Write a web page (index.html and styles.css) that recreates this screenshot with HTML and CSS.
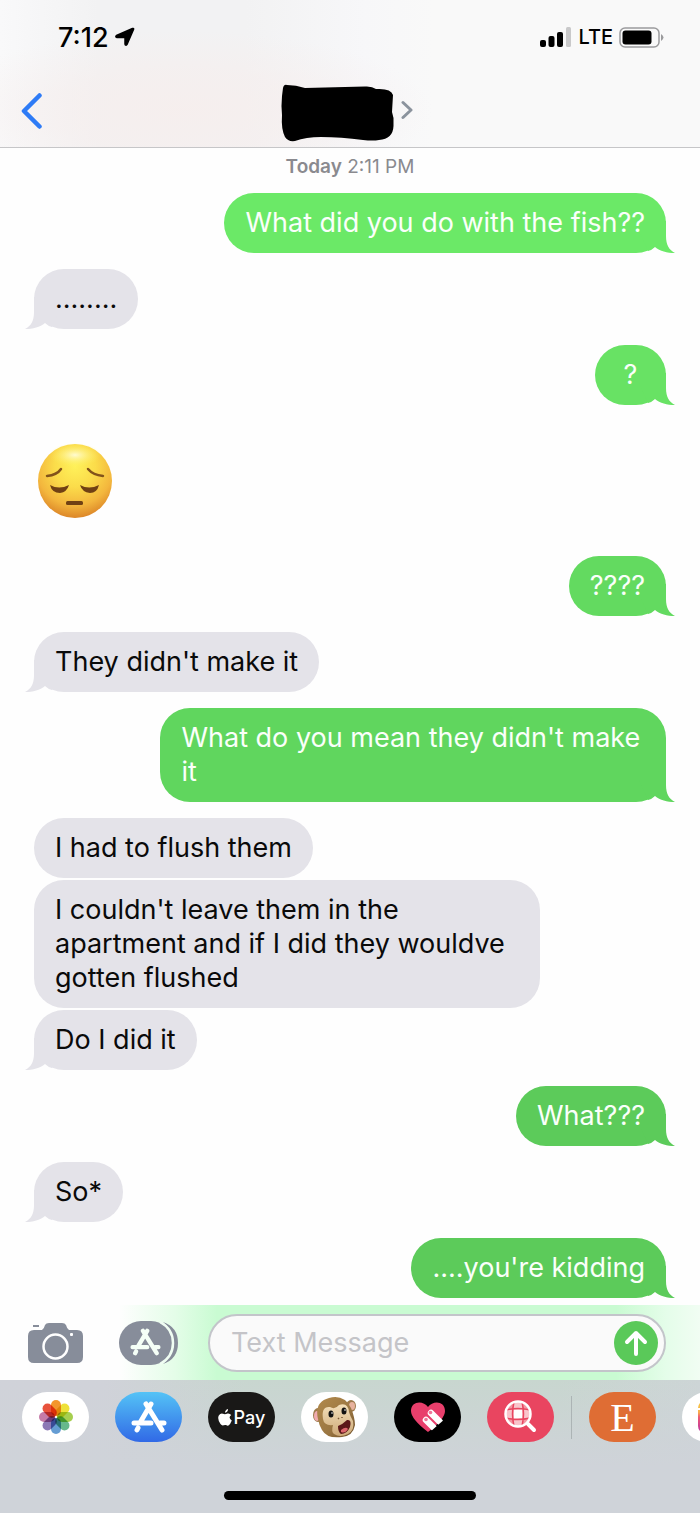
FILE: index.html
```html
<!DOCTYPE html>
<html lang="en">
<head>
<meta charset="utf-8">
<meta name="viewport" content="width=device-width, initial-scale=1">
<title>Messages</title>
<link rel="stylesheet" href="styles.css">
</head>
<body>
<svg class="defs" aria-hidden="true">
  <defs>
    <symbol id="tail" viewBox="0 0 36 32">
      <path d="M0 0H27V15C27 24 30 29 36 32C28 32 21 30 16 26Q13 29 9 30L0 10Z" fill="currentColor"/>
    </symbol>
    <symbol id="store" viewBox="0 0 36 32">
      <g fill="none" stroke="currentColor" stroke-width="5" stroke-linecap="round">
        <path d="M20 3L10 20M15 3L31 29M3 22H20M29 22H33M7 27L6 29"/>
      </g>
    </symbol>
  </defs>
</svg>
<header class="header">
  <div class="status">
    <div class="status-left">
      <time class="clock">7:12</time>
      <svg class="location" viewBox="0 0 20 20" aria-hidden="true"><path d="M1.500 8.500L17.500 1.500Q19 1 18.500 2.500L12 17.500Q10.500 19 10 17V10.500H2Q0 10 1.500 8.500Z" stroke="#000" stroke-width="1.500" stroke-linejoin="round"/></svg>
    </div>
    <div class="status-right">
      <svg class="signal" viewBox="0 0 32 20" aria-hidden="true"><rect x="0" y="13" width="6" height="7" rx="2"/><rect x="8.500" y="9" width="6" height="11" rx="2"/><rect x="17" y="5" width="6" height="15" rx="2"/><rect x="26" y="0" width="5" height="20" rx="1.500" fill="#c9c9ca"/></svg>
      <span class="network">LTE</span>
      <svg class="battery" viewBox="0 0 45 21" aria-hidden="true"><rect x="1" y="1" width="39" height="19" rx="5" fill="none" stroke="#9b9b9d" stroke-width="1.500"/><rect x="3.500" y="3.500" width="29" height="14" rx="3"/><path d="M42 7Q47 10.500 42 14Z" fill="#9b9b9d"/></svg>
    </div>
  </div>
  <nav class="nav">
    <button class="back" type="button" aria-label="Back"><svg viewBox="0 0 22 36"><path d="M18.500 2.500L3 18L18.500 33.500" fill="none" stroke="#2e7bf6" stroke-width="4.500" stroke-linecap="round" stroke-linejoin="round"/></svg></button>
    <button class="contact" type="button" aria-label="Contact details">
      <svg class="redaction" viewBox="0 0 113 58"><path d="M2 4Q3 0 6 1Q15 1 24 4L84 2.500Q91 2 95 5Q110 4 112 11L111 28L112.500 34V42Q112 55 98 56Q92 57 82 56Q60 53 40 53Q25 53 14 57Q7 58 4 53Q0 45 1 31Q0 22 1 12Z"/></svg>
      <svg class="chevron" viewBox="0 0 12 20"><path d="M2 2.500L10 10L2 17.500" fill="none" stroke="#8b939d" stroke-width="3" stroke-linecap="round" stroke-linejoin="round"/></svg>
    </button>
    <span></span>
  </nav>
</header>

<main class="thread">
  <p class="stamp"><strong>Today</strong> 2:11 PM</p>
  <p class="bubble sent tone-1">What did you do with the fish??<svg class="tail" aria-hidden="true"><use href="#tail"/></svg></p>
  <p class="bubble received">........<svg class="tail" aria-hidden="true"><use href="#tail"/></svg></p>
  <p class="bubble sent tone-2">?<svg class="tail" aria-hidden="true"><use href="#tail"/></svg></p>
  <div class="emoji">
    <svg viewBox="0 0 76 76" role="img" aria-label="Pensive face">
      <defs>
        <radialGradient id="face" cx="50%" cy="30%" r="70%"><stop offset="0" stop-color="#fff15a"/><stop offset=".4" stop-color="#fbdc4a"/><stop offset=".75" stop-color="#f3b63d"/><stop offset="1" stop-color="#dc8628"/></radialGradient>
        <radialGradient id="shine"><stop offset="0" stop-color="#fffde0" stop-opacity=".9"/><stop offset="1" stop-color="#fff35c" stop-opacity="0"/></radialGradient>
      </defs>
      <circle cx="38" cy="38" r="37" fill="url(#face)"/>
      <ellipse cx="38" cy="12" rx="26" ry="12" fill="url(#shine)"/>
      <g fill="none" stroke="#82531b" stroke-width="2.500" stroke-linecap="round"><path d="M10 33Q20 32 24 26M66 33Q56 32 51 26"/></g>
      <g fill="#704014"><path d="M13 42Q22 47 32 42Q30 49 23 50Q15 50 13 42Z"/><path d="M43 42Q52 47 62 42Q60 50 53 50Q45 49 43 42Z"/><rect x="29" y="58" width="17" height="4" rx="1.500"/></g>
    </svg>
  </div>
  <p class="bubble sent tone-3">????<svg class="tail" aria-hidden="true"><use href="#tail"/></svg></p>
  <p class="bubble received">They didn't make it<svg class="tail" aria-hidden="true"><use href="#tail"/></svg></p>
  <p class="bubble sent tone-4">What do you mean they didn't make it<svg class="tail" aria-hidden="true"><use href="#tail"/></svg></p>
  <p class="bubble received joined">I had to flush them</p>
  <p class="bubble received joined">I couldn't leave them in the apartment and if I did they wouldve gotten flushed</p>
  <p class="bubble received">Do I did it<svg class="tail" aria-hidden="true"><use href="#tail"/></svg></p>
  <p class="bubble sent tone-5">What???<svg class="tail" aria-hidden="true"><use href="#tail"/></svg></p>
  <p class="bubble received">So*<svg class="tail" aria-hidden="true"><use href="#tail"/></svg></p>
  <p class="bubble sent tone-5">....you're kidding<svg class="tail" aria-hidden="true"><use href="#tail"/></svg></p>
</main>

<form class="composer">
  <button class="camera" type="button" aria-label="Camera">
    <svg viewBox="0 0 55 42"><path d="M6 8H14Q16 7 17 3Q18 1 21 1H34Q37 1 38 3Q39 7 41 8H49Q55 8 55 14V35Q55 41 49 41H6Q0 41 0 35V14Q0 8 6 8Z" fill="#878d9a"/><rect x="5" y="3" width="6" height="2" fill="#878d9a"/><circle cx="27.500" cy="24.500" r="12" fill="none" stroke="#fff" stroke-width="2.500"/><rect x="42" y="11" width="3" height="3" rx="1" fill="#fff"/></svg>
  </button>
  <button class="apps" type="button" aria-label="Apps">
    <svg viewBox="0 0 60 44"><path d="M44 1Q59 6 59 22T44 43Q53 36 53 22T44 1Z" fill="#878d9a"/><rect width="54" height="44" rx="22" fill="#878d9a"/><path d="M41 1Q54 8 54 22T41 43" fill="none" stroke="#f0fdf3" stroke-width="2.500"/><use href="#store" x="11" y="7" width="31" height="28" color="#f5fff7"/></svg>
  </button>
  <div class="field">
    <input type="text" aria-label="Text Message" placeholder="Text Message">
    <button class="send" type="submit" aria-label="Send"><svg viewBox="0 0 24 26"><path d="M12 24V3M3 12L12 3L21 12" fill="none" stroke="#fff" stroke-width="4" stroke-linecap="round" stroke-linejoin="round"/></svg></button>
  </div>
</form>

<footer class="drawer">
  <div class="dock">
    <button class="app photos" type="button" aria-label="Photos">
      <svg viewBox="-18 -18 36 36"><g class="petals"><rect x="-5" y="-17" width="10" height="16" rx="5" fill="#f3962c"/><rect x="-5" y="-17" width="10" height="16" rx="5" fill="#eee13a" transform="rotate(45)"/><rect x="-5" y="-17" width="10" height="16" rx="5" fill="#a6cf4f" transform="rotate(90)"/><rect x="-5" y="-17" width="10" height="16" rx="5" fill="#67b88c" transform="rotate(135)"/><rect x="-5" y="-17" width="10" height="16" rx="5" fill="#659dd3" transform="rotate(180)"/><rect x="-5" y="-17" width="10" height="16" rx="5" fill="#8c78b5" transform="rotate(225)"/><rect x="-5" y="-17" width="10" height="16" rx="5" fill="#c57ba8" transform="rotate(270)"/><rect x="-5" y="-17" width="10" height="16" rx="5" fill="#e8523c" transform="rotate(315)"/></g></svg>
    </button>
    <button class="app appstore" type="button" aria-label="App Store"><svg><use href="#store"/></svg></button>
    <button class="app pay" type="button"><svg viewBox="0 0 14 17"><path d="M9.500 4.500Q11.500 4 13.200 6Q9.700 8.500 13.800 11.500Q12.500 15 10.500 16.500Q9.500 17 8 16Q7 15.700 5.500 16.300Q4 17 2.500 15Q-1 10 .8 6.500Q2.500 4 5 4.800Q7 5.600 9.500 4.500ZM7 3.800Q7 1 10 0Q10.200 3 7 3.800Z" fill="#fff"/></svg>Pay</button>
    <button class="app monkey" type="button" aria-label="Animoji">
      <svg viewBox="0 0 46 42"><defs><linearGradient id="fur" x2="1" y2="1"><stop offset="0" stop-color="#b28a4c"/><stop offset=".6" stop-color="#9a7642"/><stop offset="1" stop-color="#6b4d28"/></linearGradient><linearGradient id="skin" x2="0" y2="1"><stop offset="0" stop-color="#f3dfba"/><stop offset="1" stop-color="#cda978"/></linearGradient></defs>
      <ellipse cx="6" cy="19" rx="5" ry="7" fill="#9d7a4c"/><ellipse cx="5" cy="20" rx="3" ry="5" fill="#f0abb0"/><ellipse cx="39" cy="10" rx="5" ry="6" fill="#9d7a4c"/><ellipse cx="40" cy="10" rx="3" ry="4" fill="#e7b29e"/>
      <path d="M6 23Q2 6 17 2Q32-2 39 12Q43 22 43 29Q41 40 30 41Q15 43 10 34Q7 29 6 23Z" fill="url(#fur)"/>
      <path d="M11 23Q9 10 18 11Q23 14 27 9Q36 6 37 16Q38 20 41 25Q43 34 36 38Q28 42 22 38Q19 36 21 29Q12 30 11 23Z" fill="url(#skin)"/>
      <ellipse cx="19" cy="18" rx="2.500" ry="3.500" fill="#111"/><ellipse cx="32" cy="15" rx="2.500" ry="3.500" fill="#111"/><circle cx="20" cy="17" r=".8" fill="#fff"/><circle cx="33" cy="14" r=".8" fill="#fff"/>
      <path d="M26 22L27 23M30 21L30 22" stroke="#7b5937" stroke-width="1.500"/><path d="M26 30Q31 28 35 24Q40 23 38 31Q35 38 29 38Q26 36 26 30Z" fill="#5b1718"/><path d="M29 34Q34 30 36 33Q33 38 29 36Z" fill="#db656c"/></svg>
    </button>
    <button class="app heart" type="button" aria-label="Digital Touch">
      <svg viewBox="0 0 36 32"><path d="M18 31Q1 18 1 10C1 0 13-1 18 6C23-1 35 0 35 10Q35 18 18 31Z" fill="#e83f6c"/><g stroke="#fff" stroke-width="6.500" stroke-linecap="round"><path d="M21 12L30 21M16 19L24 27"/></g><path d="M36 17L20 31L30 32L36 28Z" fill="#000"/><circle cx="20.500" cy="11.500" r="1.800" fill="#ee7799"/><circle cx="16" cy="18.500" r="1.800" fill="#ee7799"/></svg>
    </button>
    <button class="app search" type="button" aria-label="Images">
      <svg viewBox="0 0 34 34"><circle cx="14" cy="14" r="12" fill="#f396a2"/><path d="M10 2H18V10H26V18H18V26H10V18H2V10H10Z" fill="#f9c4cb"/><path d="M10 10H18V18H10Z" fill="#fff"/><path d="M2 10Q14 7 26 10M2 18Q14 21 26 18M10 2Q7 14 10 26M18 2Q21 14 18 26" fill="none" stroke="#e94560" stroke-width="1.500"/><circle cx="14" cy="14" r="12.500" fill="none" stroke="#fff" stroke-width="2.500"/><path d="M24 24L30 30" stroke="#fff" stroke-width="4" stroke-linecap="round"/></svg>
    </button>
    <span class="divider"></span>
    <button class="app etsy" type="button">E</button>
    <button class="app more" type="button" aria-label="More apps"><svg viewBox="0 0 36 36"><defs><linearGradient id="warm" x2="0" y2="1"><stop offset="0" stop-color="#f7c83e"/><stop offset=".35" stop-color="#f9b04c"/><stop offset=".5" stop-color="#ee5b74"/><stop offset="1" stop-color="#b62fa5"/></linearGradient></defs><rect width="36" height="32" y="2" rx="7" fill="url(#warm)"/><path d="M0 10H36" stroke="#fff" stroke-width="2"/></svg></button>
  </div>
  <div class="home"></div>
</footer>
</body>
</html>
```
FILE: styles.css
```css
* { box-sizing: border-box; }

body {
  margin: 0;
  min-height: 100vh;
  display: flex;
  flex-direction: column;
  overflow-x: hidden;
  background: #fefefe;
  color: #000;
  font-family: Inter, "Liberation Sans", sans-serif;
}

button {
  margin: 0;
  padding: 0;
  border: 0;
  background: none;
  font: inherit;
  color: inherit;
}

svg { display: block; }

.defs {
  position: absolute;
  width: 0;
  height: 0;
}

.header {
  height: 148px;
  border-bottom: 1px solid #c6c6c8;
  background:
    radial-gradient(ellipse 250px 80px at 26% 75%, rgba(246, 238, 237, .9), rgba(246, 238, 237, .6) 50%, rgba(246, 238, 237, 0)),
    linear-gradient(90deg, #f9f9fa 0, #f2f2f3 14%, #f2f2f3 35%, #f7f7f9 52%, #f9f9f9 62%);
}

.status {
  display: flex;
  justify-content: space-between;
  align-items: center;
  height: 74px;
  padding: 0 36px 0 58px;
}

.status-left,
.status-right {
  display: flex;
  align-items: center;
  gap: 6px;
}

.clock {
  font-size: 27px;
  font-weight: 500;
}

.location { width: 20px; height: 20px; }
.signal { width: 32px; height: 20px; }
.battery { width: 45px; height: 21px; }

.network {
  font-size: 20px;
  font-weight: 500;
}

.nav {
  display: grid;
  grid-template-columns: 1fr auto 1fr;
  align-items: center;
  height: 73px;
  padding: 0 28px 0 21px;
}

.back svg { width: 22px; height: 36px; }

.contact {
  display: flex;
  align-items: center;
  gap: 7px;
  padding-bottom: 2px;
}

.redaction { width: 113px; height: 58px; margin-top: 6px; }
.chevron { width: 12px; height: 20px; }

.thread {
  flex: 1;
  display: flex;
  flex-direction: column;
  align-items: flex-start;
  padding: 7px 34px;
}

.stamp {
  align-self: center;
  margin: 0 0 14px;
  color: #8a8a8f;
  font-size: 19px;
  line-height: 24px;
}

.stamp strong { font-weight: 600; }

.bubble {
  position: relative;
  z-index: 0;
  min-width: 71px;
  max-width: 80%;
  margin: 0 0 16px;
  padding: 13px 21px;
  border-radius: 30px;
  font-size: 27px;
  line-height: 34px;
}

.bubble:last-child { margin-bottom: 0; }

.received {
  background: #e4e3e9;
  color: #e4e3e9;
  -webkit-text-fill-color: #0a0a0a;
}

.joined { margin-bottom: 2px; }

.sent {
  align-self: flex-end;
  background: var(--tone);
  color: var(--tone);
  -webkit-text-fill-color: #fafffa;
}

.tone-1 { --tone: #6be967; }
.tone-2 { --tone: #68e264; text-align: center; }
.tone-3 { --tone: #63da60; }
.tone-4 { --tone: #60d65e; }
.tone-5 { --tone: #5ccb5a; }

.tail {
  position: absolute;
  z-index: -1;
  right: -9px;
  bottom: 0;
  width: 36px;
  height: 32px;
}

.received .tail {
  right: auto;
  left: -9px;
  transform: scaleX(-1);
}

.emoji {
  display: flex;
  align-items: center;
  height: 119px;
  margin: 0 0 16px 3px;
}

.emoji svg { width: 76px; height: 76px; }

.composer {
  display: flex;
  align-items: center;
  height: 75px;
  padding: 0 34px 0 28px;
  background: linear-gradient(90deg, #fefefe 17%, #e4fde8 25%, #c9fbd2 31%, #c9fbd2 88%, #e4fde9 95%, #f1fdf3);
}

.camera { margin-right: 36px; }
.camera svg { width: 55px; height: 42px; }
.apps { margin-right: 29px; }
.apps svg { width: 60px; height: 44px; }

.field {
  flex: 1;
  min-width: 0;
  display: flex;
  align-items: center;
  height: 58px;
  padding: 0 6px 0 21px;
  border: 2px solid #c3c5ca;
  border-radius: 29px;
  background: #fafafa;
}

.field input {
  flex: 1;
  min-width: 0;
  padding: 0;
  border: 0;
  outline: 0;
  background: none;
  font: inherit;
  font-size: 27px;
}

.field input::placeholder { color: #c4c4c8; opacity: 1; }

.send {
  display: grid;
  place-items: center;
  width: 44px;
  height: 44px;
  border-radius: 50%;
  background: #5ac959;
}

.send svg { width: 24px; height: 26px; }

.drawer {
  display: flex;
  flex-direction: column;
  justify-content: space-between;
  height: 133px;
  padding: 12px 0 13px;
  overflow: hidden;
  background: linear-gradient(180deg, rgba(207, 211, 217, 0), #cfd3d9 65%), linear-gradient(90deg, #d0d2d9 15%, #c8d6cf 35%, #c8d6cf 80%, #cdd5d6);
}

.dock {
  display: flex;
  align-items: center;
  gap: 26px;
  padding-left: 22px;
}

.app {
  flex: none;
  display: flex;
  align-items: center;
  justify-content: center;
  width: 67px;
  height: 50px;
  border-radius: 25px;
  background: #fff;
}

.photos svg { width: 36px; height: 36px; isolation: isolate; }
.petals rect { mix-blend-mode: multiply; }

.appstore {
  background: linear-gradient(#54c3f6, #3169e6);
  color: #fff;
}

.appstore svg { width: 36px; height: 32px; }

.pay {
  gap: 2px;
  background: #191817;
  color: #fff;
  font-size: 18px;
  font-weight: 500;
}

.pay svg { width: 14px; height: 17px; }
.monkey svg { width: 46px; height: 42px; }
.heart { background: #000; }
.heart svg { width: 36px; height: 32px; }
.search { background: #e94560; }
.search svg { width: 34px; height: 34px; }

.divider {
  flex: none;
  width: 1px;
  height: 43px;
  margin: 0 -9px;
  background: #acb4b5;
}

.etsy {
  background: #df6d34;
  color: #fff;
  font-family: "Liberation Serif", serif;
  font-size: 40px;
}

.more svg { width: 36px; height: 36px; }

.home {
  align-self: center;
  width: 36%;
  height: 9px;
  border-radius: 5px;
  background: #000;
}
```
